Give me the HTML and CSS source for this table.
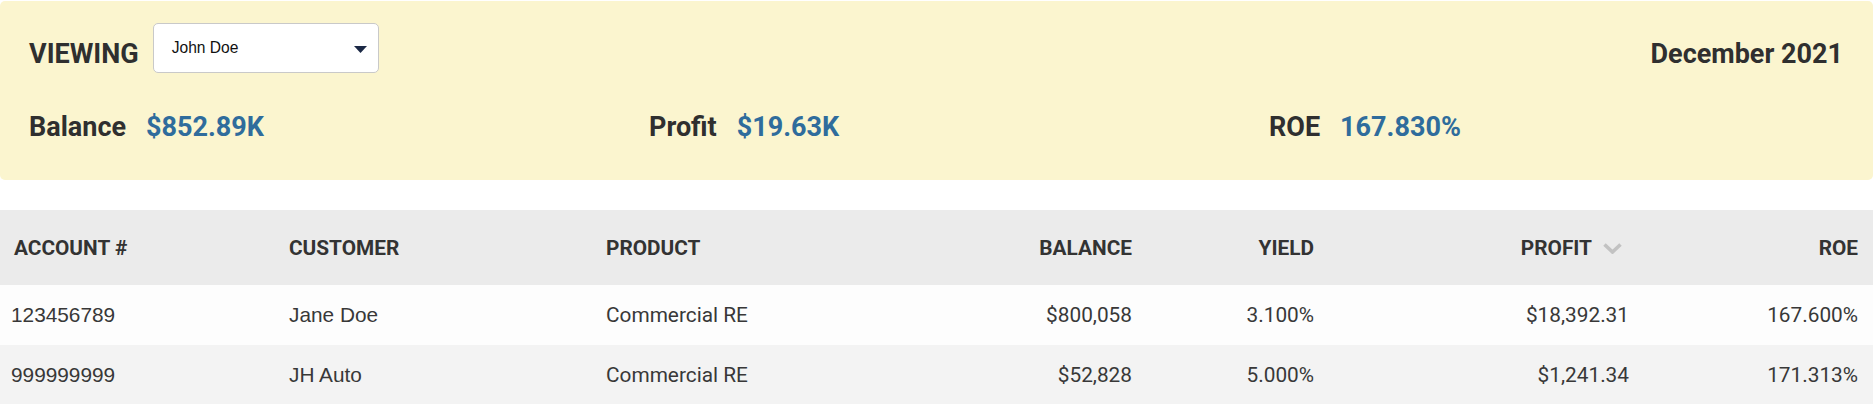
FILE: index.html
```html
<!DOCTYPE html>
<html lang="en">
<head>
<meta charset="utf-8">
<title>Portfolio</title>
<link rel="stylesheet" href="styles.css">
</head>
<body>
<div class="page">
  <section class="summary">
    <div class="summary-top">
      <span class="viewing">VIEWING</span>
      <div class="picker">
        <span class="picker-text">John Doe</span>
        <svg class="picker-caret" width="13" height="7" viewBox="0 0 13 7"><path d="M0 0 H13 L6.5 7 Z" fill="#1b2845"/></svg>
      </div>
      <span class="period">December 2021</span>
    </div>
    <div class="stats">
      <div class="stat"><span class="stat-label">Balance</span><span class="stat-value">$852.89K</span></div>
      <div class="stat"><span class="stat-label">Profit</span><span class="stat-value">$19.63K</span></div>
      <div class="stat"><span class="stat-label">ROE</span><span class="stat-value">167.830%</span></div>
    </div>
  </section>

  <table class="grid">
    <colgroup>
      <col class="c1"><col class="c2"><col class="c3"><col class="c4"><col class="c5"><col class="c6"><col class="c7">
    </colgroup>
    <thead>
      <tr>
        <th class="left first">ACCOUNT #</th>
        <th class="left">CUSTOMER</th>
        <th class="left">PRODUCT</th>
        <th class="right">BALANCE</th>
        <th class="right">YIELD</th>
        <th class="right sorted">PROFIT<svg class="sort" width="19" height="11" viewBox="0 0 19 11"><path d="M1.5 1.5 L9.5 9 L17.5 1.5" fill="none" stroke="#c2c2c2" stroke-width="3.6"/></svg></th>
        <th class="right">ROE</th>
      </tr>
    </thead>
    <tbody>
      <tr class="odd">
        <td class="left first arial">123456789</td>
        <td class="left arial">Jane Doe</td>
        <td class="left">Commercial RE</td>
        <td class="right">$800,058</td>
        <td class="right">3.100%</td>
        <td class="right">$18,392.31</td>
        <td class="right">167.600%</td>
      </tr>
      <tr class="even">
        <td class="left first arial">999999999</td>
        <td class="left arial">JH Auto</td>
        <td class="left">Commercial RE</td>
        <td class="right">$52,828</td>
        <td class="right">5.000%</td>
        <td class="right">$1,241.34</td>
        <td class="right">171.313%</td>
      </tr>
    </tbody>
  </table>
</div>
</body>
</html>
```

FILE: styles.css
```css
* { box-sizing: border-box; }

html, body {
  margin: 0;
  padding: 0;
  background: #ffffff;
}

body {
  font-family: Roboto, "Liberation Sans", Arial, sans-serif;
  color: #333333;
}

.page {
  width: 1873px;
}

.summary {
  margin-top: 1px;
  background: #fbf5cf;
  border-radius: 5px;
  padding: 22px 30px 37px 29px;
}

.summary-top {
  display: flex;
  align-items: flex-start;
  height: 50px;
}

.viewing,
.period {
  font-size: 27px;
  font-weight: 700;
  line-height: 32px;
  margin-top: 15px;
  color: #2f2f2f;
}

.period {
  margin-left: auto;
}

.picker {
  margin-left: 14px;
  width: 226px;
  height: 50px;
  background: #ffffff;
  border: 1px solid #c9c9c9;
  border-radius: 5px;
  display: flex;
  align-items: center;
  justify-content: space-between;
  padding: 0 11px 0 18px;
}

.picker-text {
  font-family: "Liberation Sans", Arial, sans-serif;
  font-size: 15.6px;
  color: #111111;
}

.picker-caret {
  display: block;
  margin-top: 3px;
}

.stats {
  display: grid;
  grid-template-columns: 620px 620px 1fr;
  margin-top: 38px;
}

.stat {
  display: flex;
  align-items: baseline;
  gap: 20px;
  font-size: 27px;
  font-weight: 700;
  line-height: 32px;
}

.stat-label {
  color: #2f2f2f;
}

.stat-value {
  color: #2f6c9c;
}

.grid {
  margin-top: 30px;
  width: 1873px;
  border-collapse: collapse;
  table-layout: fixed;
  font-size: 20.8px;
}

.c1 { width: 277px; }
.c2 { width: 317px; }
.c3 { width: 353px; }
.c4 { width: 200px; }
.c5 { width: 182px; }
.c6 { width: 315px; }
.c7 { width: 229px; }

.grid th,
.grid td {
  padding: 0 15px 0 12px;
  vertical-align: middle;
  white-space: nowrap;
}

.grid thead tr {
  background: #ebebeb;
  height: 75px;
}

.grid th {
  font-weight: 700;
  color: #333333;
}

.grid th.first { padding-left: 14px; }
.grid td.first { padding-left: 11px; }

.grid td {
  font-weight: 400;
  color: #383838;
}

.grid tbody tr { height: 60px; }
.grid tr.odd { background: #fdfdfd; }
.grid tr.even { background: #f3f3f3; }

.left { text-align: left; }
.right { text-align: right; }

.arial {
  font-family: "Liberation Sans", Arial, sans-serif;
}

.sorted .sort {
  margin-left: 11px;
  margin-right: 7px;
  vertical-align: middle;
  position: relative;
  top: -1px;
}
```
